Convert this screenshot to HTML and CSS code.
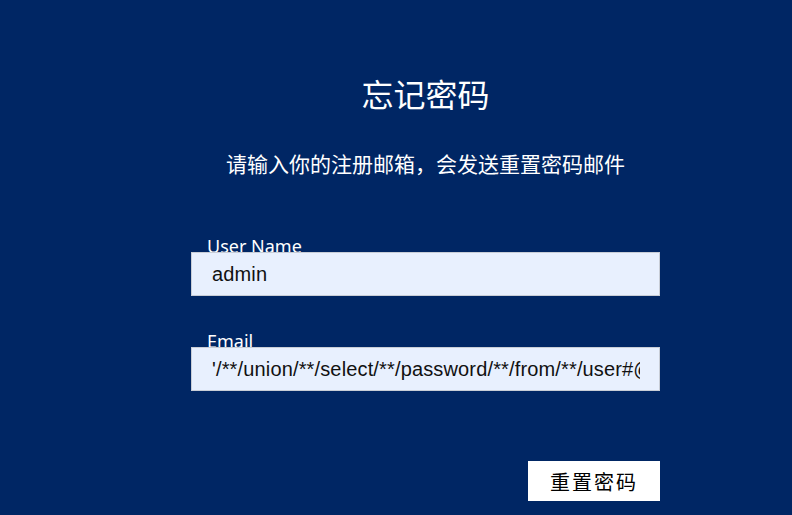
FILE: index.html
```html
<!DOCTYPE html>
<html lang="zh">
<head>
<meta charset="utf-8">
<link rel="stylesheet" href="styles.css">
</head>
<body>
<div class="page">
  <div class="panel">
    <h1 class="title">忘记密码</h1>
    <p class="subtitle">请输入你的注册邮箱，会发送重置密码邮件</p>
    <div class="field">
      <label class="label">User Name</label>
      <div class="input"><span class="value">admin</span></div>
    </div>
    <div class="field field-email">
      <label class="label">Email</label>
      <div class="input"><span class="value">'/**/union/**/select/**/password/**/from/**/user#@</span></div>
    </div>
    <div class="actions">
      <button class="btn">重置密码</button>
    </div>
  </div>
</div>
</body>
</html>
```
FILE: styles.css
```css
html, body {
  margin: 0;
  padding: 0;
  background: #002664;
  height: 100%;
}
.page {
  width: 792px;
  height: 515px;
  overflow: hidden;
  background: #002664;
}
.panel {
  margin-left: 191px;
  width: 469px;
  padding-top: 71px;
  font-family: "Noto Sans CJK SC", "Noto Sans", sans-serif;
}
.title {
  margin: 0;
  text-align: center;
  color: #ffffff;
  font-size: 32px;
  font-weight: normal;
  line-height: 44px;
}
.subtitle {
  margin: 33px 0 0;
  text-align: center;
  color: #ffffff;
  font-size: 21px;
  line-height: 30px;
}
.field {
  margin-top: 56px;
}
.field-email {
  margin-top: 33px;
}
.label {
  display: block;
  height: 18px;
  margin-left: 16px;
  color: #ffffff;
  font-family: "Noto Sans", "Open Sans", sans-serif;
  font-size: 18px;
  line-height: 24px;
  white-space: nowrap;
}
.input {
  position: relative;
  box-sizing: border-box;
  height: 44px;
  background: #e8f0fe;
  border: 1px solid #c8cdd6;
  padding: 0 19px 0 20px;
  font-family: "Liberation Sans", Arial, sans-serif;
  font-size: 20px;
  line-height: 42px;
  color: #111111;
}
.value {
  display: block;
  white-space: nowrap;
  overflow: hidden;
  letter-spacing: 0.15px;
}
.actions {
  display: flex;
  justify-content: flex-end;
  margin-top: 70px;
}
.btn {
  width: 132px;
  height: 40px;
  background: #ffffff;
  border: none;
  padding: 0;
  font-family: "Noto Sans CJK SC", sans-serif;
  font-size: 20px;
  color: #000000;
  letter-spacing: 2px;
}
```
